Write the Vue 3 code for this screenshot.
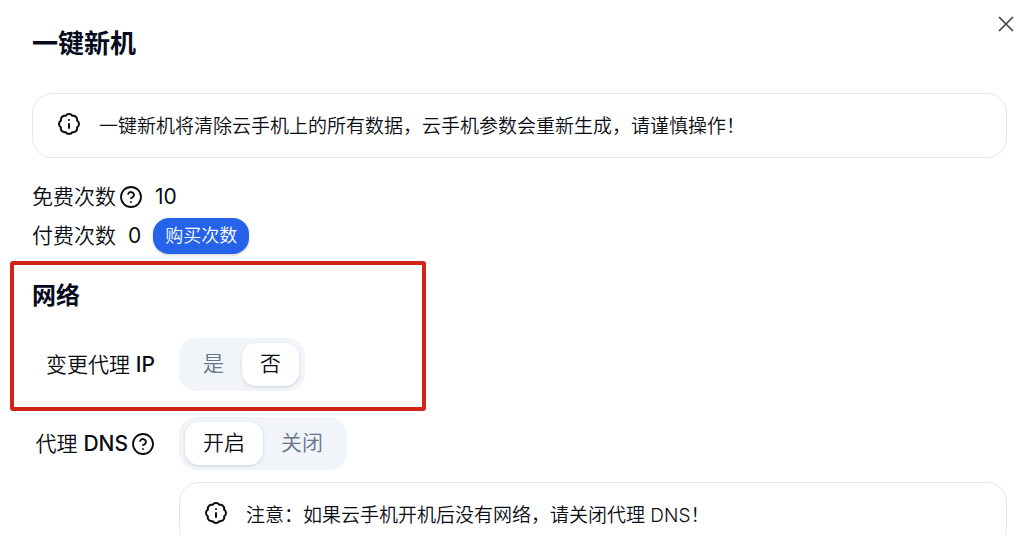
<script setup>
import { ref } from 'vue'

const changeIp = ref('no')
const proxyDns = ref('on')

const ipOptions = [
  { value: 'yes', label: '是' },
  { value: 'no', label: '否' },
]
const dnsOptions = [
  { value: 'on', label: '开启' },
  { value: 'off', label: '关闭' },
]

const badge =
  'M3.85 8.62a4 4 0 0 1 4.78-4.77 4 4 0 0 1 6.74 0 4 4 0 0 1 4.78 4.78 4 4 0 0 1 0 6.74 4 4 0 0 1-4.77 4.78 4 4 0 0 1-6.75 0 4 4 0 0 1-4.78-4.77 4 4 0 0 1 0-6.76Z'
</script>

<template>
  <main class="dialog">
    <button class="close" type="button" aria-label="关闭">
      <svg viewBox="0 0 16 16" width="16" height="16"><path d="M1.5 1.5l13 13M14.5 1.5l-13 13" /></svg>
    </button>

    <h1 class="title">一键新机</h1>

    <div class="alert" role="alert">
      <svg class="icon" viewBox="0 0 24 24"><path :d="badge" /><path d="M12 16v-4M12 8h.01" /></svg>
      <p>一键新机将清除云手机上的所有数据，云手机参数会重新生成，请谨慎操作！</p>
    </div>

    <div class="counts">
      <div class="count">
        <span class="name">免费次数<svg class="icon" viewBox="0 0 24 24"><circle cx="12" cy="12" r="10" /><path d="M9.09 9a3 3 0 0 1 5.83 1c0 2-3 3-3 3M12 17h.01" /></svg></span>
        <span class="number">10</span>
      </div>
      <div class="count">
        <span class="name">付费次数</span>
        <span class="number">0</span>
        <button class="buy" type="button">购买次数</button>
      </div>
    </div>

    <section class="network">
      <h2 class="heading">网络</h2>
      <div class="field" role="radiogroup" aria-labelledby="ip-label">
        <span id="ip-label" class="label"><span>变更代理 <b>IP</b></span></span>
        <div class="segmented">
          <label v-for="o in ipOptions" :key="o.value" class="option" :class="{ active: changeIp === o.value }">
            <input v-model="changeIp" type="radio" name="change-ip" :value="o.value" />{{ o.label }}
          </label>
        </div>
      </div>
      <div class="highlight"></div>
    </section>

    <div class="field" role="radiogroup" aria-labelledby="dns-label">
      <span id="dns-label" class="label"><span>代理 <b>DNS</b></span><svg class="icon" viewBox="0 0 24 24"><circle cx="12" cy="12" r="10" /><path d="M9.09 9a3 3 0 0 1 5.83 1c0 2-3 3-3 3M12 17h.01" /></svg></span>
      <div class="segmented">
        <label v-for="o in dnsOptions" :key="o.value" class="option" :class="{ active: proxyDns === o.value }">
          <input v-model="proxyDns" type="radio" name="proxy-dns" :value="o.value" />{{ o.label }}
        </label>
      </div>
      <div class="alert note" role="note">
        <svg class="icon" viewBox="0 0 24 24"><path :d="badge" /><path d="M12 16v-4M12 8h.01" /></svg>
        <p>注意：如果云手机开机后没有网络，请关闭代理 DNS！</p>
      </div>
    </div>
  </main>
</template>

<style>
body {
  background: #fff;
  overflow: hidden;
}
</style>

<style scoped>
.dialog {
  position: relative;
  padding: 28px 28px 28px 32px;
  font-family: Inter, "Noto Sans CJK SC", sans-serif;
  font-size: 21px;
  font-weight: 350;
  line-height: 32px;
  color: #0a0c14;
}
.dialog * {
  box-sizing: border-box;
}
.close {
  position: absolute;
  top: 12px;
  right: 17px;
  display: flex;
  padding: 4px;
  border: 0;
  background: none;
  cursor: pointer;
}
.close svg {
  fill: none;
  stroke: #444;
  stroke-width: 1.7;
  stroke-linecap: round;
}
.icon {
  flex: none;
  width: 24px;
  height: 24px;
  fill: none;
  stroke: currentColor;
  stroke-width: 2;
  stroke-linecap: round;
  stroke-linejoin: round;
}
.name .icon,
.label .icon {
  stroke-width: 1.8;
}
.title,
.heading {
  margin: 0;
  font-weight: 700;
  line-height: 32px;
  color: #050a1c;
}
.title {
  font-size: 26px;
}
.heading {
  font-size: 24px;
}
.alert {
  display: flex;
  align-items: flex-start;
  gap: 18px;
  margin-top: 33px;
  padding: 17px 24px 14px;
  border: 1px solid #e6e7ea;
  border-radius: 20px;
  font-size: 19px;
}
.alert .icon {
  margin-top: 1px;
}
.alert p {
  margin: 0;
  line-height: 32px;
}
.counts {
  display: flex;
  flex-direction: column;
  gap: 5px;
  margin-top: 23px;
}
.count {
  display: flex;
  align-items: center;
  gap: 12px;
}
.name {
  display: flex;
  align-items: center;
  gap: 3px;
}
.number {
  font-weight: 400;
}
.buy {
  height: 36px;
  padding: 0 12px;
  border: 0;
  border-radius: 16px;
  background: #2563eb;
  box-shadow: 0 1px 3px rgba(0, 0, 0, 0.2);
  color: #fff;
  font: inherit;
  font-size: 18px;
  cursor: pointer;
}
.network {
  position: relative;
  margin-top: 26px;
}
.highlight {
  position: absolute;
  top: -19px;
  bottom: -20px;
  left: -22px;
  width: 416px;
  border: 4px solid #d12318;
  border-radius: 3px;
  pointer-events: none;
}
.field {
  display: grid;
  grid-template-columns: 123px 1fr;
  column-gap: 24px;
  align-items: center;
  margin-top: 26px;
}
.label {
  display: flex;
  align-items: center;
  justify-content: flex-end;
  gap: 3px;
  white-space: nowrap;
}
.label b {
  font-weight: 500;
}
.segmented {
  display: flex;
  justify-self: start;
  padding: 5px 6px;
  border-radius: 18px;
  background: #f1f5f9;
}
.option {
  position: relative;
  padding: 5px 18px 6px;
  border-radius: 14px;
  color: #64748b;
  cursor: pointer;
}
.option.active {
  background: #fff;
  box-shadow: 0 1px 3px rgba(15, 23, 42, 0.16);
  color: #0a0c14;
}
.option input {
  position: absolute;
  inset: 0;
  margin: 0;
  opacity: 0;
  cursor: pointer;
}
.note {
  grid-column: 2;
  margin-top: 12px;
}
</style>
